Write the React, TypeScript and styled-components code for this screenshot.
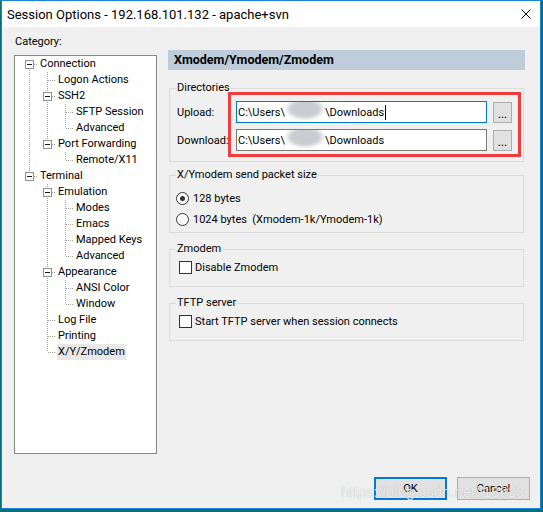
import React from 'react';
import styled, { createGlobalStyle } from 'styled-components';

const Global = createGlobalStyle`
  html, body { margin: 0; padding: 0; background: #0b6e78; }
  body { font-family: Roboto, "Liberation Sans", Arial, sans-serif; font-size: 11px; color: #000; }
  #root { width: 543px; height: 512px; overflow: hidden; }
  * { box-sizing: border-box; }
`;

const Window = styled.div`
  position: relative;
  margin-left: 1px;
  width: 540px;
  height: 509px;
  border: 1px solid #1883d7;
  background: #f0f0f0;
  display: flex;
  flex-direction: column;
`;

const TitleBar = styled.div`
  height: 26px;
  background: #fff;
  display: flex;
  align-items: center;
  justify-content: space-between;
  padding: 0 9px 0 5px;
  font-size: 13px;
  flex: none;
`;

const Body = styled.div`
  display: flex;
  gap: 11px;
  padding: 7px 14px 0 12px;
`;

const LeftCol = styled.div`
  width: 143px;
  display: flex;
  flex-direction: column;
  flex: none;
`;

const CategoryLabel = styled.div`
  height: 16px;
  line-height: 16px;
  margin-bottom: 5px;
  padding-left: 1px;
`;

const TreeBox = styled.div`
  height: 399px;
  border: 1px solid #828790;
  background: #fff;
  padding-left: 5px;
`;

const TreeRow = styled.div`
  display: flex;
  align-items: center;
  height: 16px;
`;

const CellSvg = styled.svg`
  display: block;
  flex: none;
`;

const TreeLabel = styled.span<{ $selected?: boolean }>`
  margin-left: 1px;
  padding: 0 1px;
  line-height: 16px;
  height: 16px;
  white-space: nowrap;
  background: ${(p) => (p.$selected ? '#e8e8e8' : 'transparent')};
`;

const RightCol = styled.div`
  position: relative;
  width: 357px;
  margin-top: 16px;
  display: flex;
  flex-direction: column;
  flex: none;
`;

const PanelHeader = styled.div`
  height: 20px;
  line-height: 20px;
  background: #bfcddb;
  padding-left: 6px;
  font-weight: bold;
  font-size: 12.5px;
`;

const Group = styled.fieldset<{ $mt: number }>`
  margin: ${(p) => p.$mt}px 1px 0 1px;
  padding: 0;
  min-width: 0;
  border: 1px solid #dcdcdc;
`;

const Legend = styled.legend`
  margin-left: 6px;
  padding: 0 1px;
  line-height: 14px;
  height: 14px;
`;

const DirGrid = styled.div`
  display: grid;
  grid-template-columns: 53px 251px 19px;
  grid-auto-rows: 22px;
  column-gap: 6px;
  row-gap: 6px;
  align-items: center;
  padding: 6px 0 10px 7px;
`;

const FieldInput = styled.div<{ $focused?: boolean }>`
  height: 22px;
  border: 1px solid ${(p) => (p.$focused ? '#0078d7' : '#7a7a7a')};
  background: #fff;
  display: flex;
  align-items: center;
  padding-left: 1px;
  white-space: nowrap;
  overflow: hidden;
`;

const Blur = styled.span`
  display: inline-block;
  width: 40px;
  height: 22px;
  margin: -6px 0 0 0;
  background: radial-gradient(ellipse at center, #c9cdd1 48%, rgba(215, 218, 222, 0) 74%);
  filter: blur(1px);
`;

const Caret = styled.span`
  display: inline-block;
  width: 1px;
  height: 15px;
  background: #000;
  margin-left: 1px;
`;

const Browse = styled.div`
  width: 19px;
  height: 21px;
  background: #e1e1e1;
  border: 1px solid #adadad;
  display: flex;
  align-items: flex-end;
  justify-content: center;
  padding-bottom: 3px;
  line-height: 10px;
  font-size: 12px;
`;

const OptionList = styled.div<{ $pt: number; $pb: number; $pl: number; $gap: number }>`
  display: flex;
  flex-direction: column;
  gap: ${(p) => p.$gap}px;
  padding: ${(p) => p.$pt}px 0 ${(p) => p.$pb}px ${(p) => p.$pl}px;
`;

const OptionRow = styled.label<{ $gap: number }>`
  display: flex;
  align-items: center;
  gap: ${(p) => p.$gap}px;
  height: 16px;
  white-space: pre;
`;

const Radio = styled.span<{ $checked?: boolean }>`
  width: 13px;
  height: 13px;
  border-radius: 50%;
  border: 1px solid #333;
  background: #fff;
  display: flex;
  align-items: center;
  justify-content: center;
  flex: none;
  &::after {
    content: '';
    width: 5px;
    height: 5px;
    border-radius: 50%;
    background: ${(p) => (p.$checked ? '#333' : 'transparent')};
  }
`;

const Check = styled.span`
  width: 13px;
  height: 13px;
  border: 1px solid #333;
  background: #fff;
  flex: none;
`;

const Highlight = styled.div`
  position: absolute;
  left: 60px;
  top: 42px;
  width: 293px;
  height: 65px;
  border: 3px solid #f03c3c;
  pointer-events: none;
`;

const Footer = styled.div`
  margin-top: auto;
  display: flex;
  justify-content: flex-end;
  gap: 10px;
  padding: 0 10px 8px 0;
`;

const Button = styled.button<{ $default?: boolean }>`
  width: 73px;
  height: 23px;
  background: #e1e1e1;
  border: 1px solid ${(p) => (p.$default ? '#0078d7' : '#adadad')};
  box-shadow: ${(p) => (p.$default ? 'inset 0 0 0 1px #0078d7' : 'none')};
  font: inherit;
  color: #000;
  padding: 0;
`;

const Watermark = styled.div`
  position: absolute;
  left: 339px;
  top: 482px;
  font-family: "Liberation Sans", Arial, sans-serif;
  font-size: 15px;
  color: rgba(255, 255, 255, 0.75);
  text-shadow: 0 0 1px rgba(120, 120, 120, 0.55);
  pointer-events: none;
  white-space: nowrap;
`;

type TNode = { label: string; children?: TNode[]; selected?: boolean };
type Row = {
  label: string;
  level: number;
  guides: boolean[];
  hasNext: boolean;
  hasPrev: boolean;
  hasChildren: boolean;
  selected?: boolean;
};

const tree: TNode[] = [
  {
    label: 'Connection',
    children: [
      { label: 'Logon Actions' },
      { label: 'SSH2', children: [{ label: 'SFTP Session' }, { label: 'Advanced' }] },
      { label: 'Port Forwarding', children: [{ label: 'Remote/X11' }] },
    ],
  },
  {
    label: 'Terminal',
    children: [
      {
        label: 'Emulation',
        children: [{ label: 'Modes' }, { label: 'Emacs' }, { label: 'Mapped Keys' }, { label: 'Advanced' }],
      },
      { label: 'Appearance', children: [{ label: 'ANSI Color' }, { label: 'Window' }] },
      { label: 'Log File' },
      { label: 'Printing' },
      { label: 'X/Y/Zmodem', selected: true },
    ],
  },
];

function flatten(nodes: TNode[], level: number, guides: boolean[], out: Row[]) {
  nodes.forEach((n, i) => {
    const hasNext = i < nodes.length - 1;
    out.push({
      label: n.label,
      level,
      guides,
      hasNext,
      hasPrev: i > 0,
      hasChildren: !!n.children,
      selected: n.selected,
    });
    if (n.children) flatten(n.children, level + 1, [...guides, hasNext], out);
  });
}

const rows: Row[] = [];
flatten(tree, 0, [], rows);

const LINE = '#a0a0a0';

function TreeCell({ top, bottom, right, box }: { top?: boolean; bottom?: boolean; right?: boolean; box?: boolean }) {
  return (
    <CellSvg width="18" height="16" viewBox="0 0 18 16" shapeRendering="crispEdges">
      {top && <line x1="9.5" y1="0" x2="9.5" y2={box ? 4 : 8} stroke={LINE} strokeDasharray="1 1" />}
      {bottom && <line x1="9.5" y1={box ? 14 : 8} x2="9.5" y2="16" stroke={LINE} strokeDasharray="1 1" />}
      {right && <line x1={box ? 14 : 10} y1="8.5" x2="18" y2="8.5" stroke={LINE} strokeDasharray="1 1" />}
      {box && (
        <>
          <rect x="5.5" y="4.5" width="8" height="8" fill="#fff" stroke="#919191" />
          <line x1="7" y1="8.5" x2="12" y2="8.5" stroke="#1a1a1a" />
        </>
      )}
    </CellSvg>
  );
}

function CloseIcon() {
  return (
    <svg width="10" height="10" viewBox="0 0 10 10">
      <path d="M0.5 0.5 L9.5 9.5 M9.5 0.5 L0.5 9.5" stroke="#000" strokeWidth="1" fill="none" />
    </svg>
  );
}

export default function App() {
  return (
    <>
      <Global />
      <Window>
        <TitleBar>
          <span>Session Options - 192.168.101.132 - apache+svn</span>
          <CloseIcon />
        </TitleBar>
        <Body>
          <LeftCol>
            <CategoryLabel>Category:</CategoryLabel>
            <TreeBox>
              {rows.map((r, i) => (
                <TreeRow key={i}>
                  {r.guides.map((g, k) => (
                    <TreeCell key={k} top={g} bottom={g} />
                  ))}
                  <TreeCell top={r.level > 0 || r.hasPrev} bottom={r.hasNext} right box={r.hasChildren} />
                  <TreeLabel $selected={r.selected}>{r.label}</TreeLabel>
                </TreeRow>
              ))}
            </TreeBox>
          </LeftCol>
          <RightCol>
            <PanelHeader>Xmodem/Ymodem/Zmodem</PanelHeader>
            <Group $mt={11}>
              <Legend>Directories</Legend>
              <DirGrid>
                <span>Upload:</span>
                <FieldInput $focused>
                  {'C:\\Users\\'}
                  <Blur />
                  {'\\Downloads'}
                  <Caret />
                </FieldInput>
                <Browse>...</Browse>
                <span>Download:</span>
                <FieldInput>
                  {'C:\\Users\\'}
                  <Blur />
                  {'\\Downloads'}
                </FieldInput>
                <Browse>...</Browse>
              </DirGrid>
            </Group>
            <Group $mt={6}>
              <Legend>X/Ymodem send packet size</Legend>
              <OptionList $pt={8} $pb={5} $pl={6} $gap={5}>
                <OptionRow $gap={4}>
                  <Radio $checked />
                  128 bytes
                </OptionRow>
                <OptionRow $gap={4}>
                  <Radio />
                  {'1024 bytes  (Xmodem-1k/Ymodem-1k)'}
                </OptionRow>
              </OptionList>
            </Group>
            <Group $mt={9}>
              <Legend>Zmodem</Legend>
              <OptionList $pt={3} $pb={11} $pl={9} $gap={0}>
                <OptionRow $gap={3}>
                  <Check />
                  Disable Zmodem
                </OptionRow>
              </OptionList>
            </Group>
            <Group $mt={9}>
              <Legend>TFTP server</Legend>
              <OptionList $pt={3} $pb={11} $pl={9} $gap={0}>
                <OptionRow $gap={3}>
                  <Check />
                  Start TFTP server when session connects
                </OptionRow>
              </OptionList>
            </Group>
            <Highlight />
          </RightCol>
        </Body>
        <Footer>
          <Button $default>OK</Button>
          <Button>Cancel</Button>
        </Footer>
        <Watermark>https://blog.csdn.net/l13623</Watermark>
      </Window>
    </>
  );
}
